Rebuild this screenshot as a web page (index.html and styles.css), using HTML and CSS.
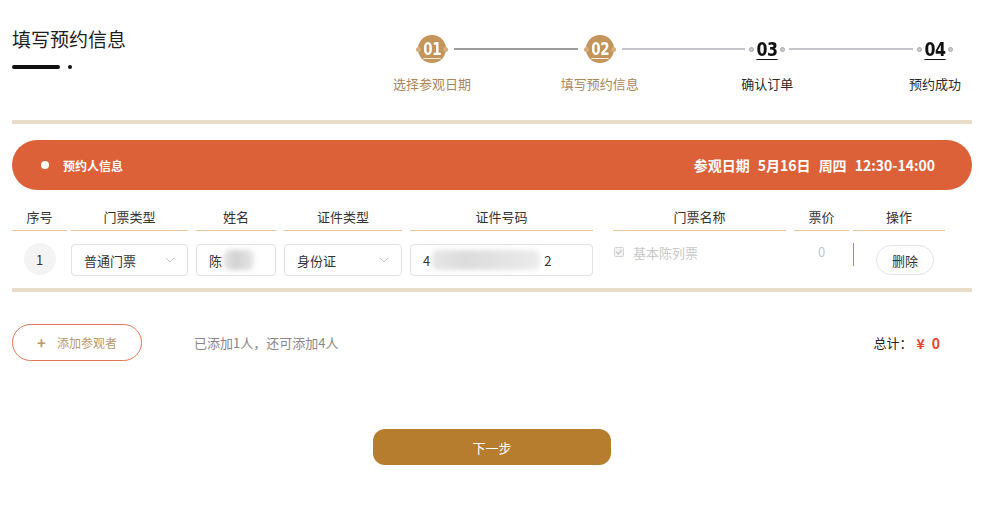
FILE: index.html
```html
<!DOCTYPE html>
<html lang="zh-CN">
<head>
<meta charset="utf-8">
<title>填写预约信息</title>
<link rel="stylesheet" href="styles.css">
</head>
<body>
<div class="page">
  <header class="top">
    <div class="title-block">
      <h1 class="title">填写预约信息</h1>
      <div class="title-mark"><span class="bar"></span><span class="tdot"></span></div>
    </div>
    <div class="steps">
      <div class="marks">
        <div class="mark"><span class="sd"></span><span class="circle"><span class="num">01</span></span><span class="sd"></span></div>
        <span class="line dark"></span>
        <div class="mark"><span class="sd"></span><span class="circle"><span class="num">02</span></span><span class="sd"></span></div>
        <span class="line"></span>
        <div class="mark"><span class="gd"></span><span class="num plain">03</span><span class="gd"></span></div>
        <span class="line"></span>
        <div class="mark"><span class="gd"></span><span class="num plain">04</span><span class="gd"></span></div>
      </div>
      <div class="labels">
        <span class="label active">选择参观日期</span>
        <span class="label active">填写预约信息</span>
        <span class="label">确认订单</span>
        <span class="label">预约成功</span>
      </div>
    </div>
  </header>

  <div class="sep"></div>

  <div class="banner">
    <span class="b-dot"></span>
    <span class="b-title">预约人信息</span>
    <span class="b-date">参观日期<span class="sp">5月16日</span><span class="sp">周四</span><span class="sp">12:30-14:00</span></span>
  </div>

  <div class="trow thead">
    <div class="cell c1">序号</div>
    <div class="cell c2">门票类型</div>
    <div class="cell c3">姓名</div>
    <div class="cell c4">证件类型</div>
    <div class="cell c5">证件号码</div>
    <div class="cell c6">门票名称</div>
    <div class="cell c7">票价</div>
    <div class="cell c8">操作</div>
  </div>

  <div class="trow tbody">
    <div class="c1 idx-cell"><span class="idx">1</span></div>
    <div class="c2 field select">普通门票<svg class="chev" width="10" height="6" viewBox="0 0 10 6"><polyline points="1,1 5,5 9,1" fill="none" stroke="#c0c4cc" stroke-width="1"/></svg></div>
    <div class="c3 field">陈<span class="blur blur-name"></span></div>
    <div class="c4 field select">身份证<svg class="chev" width="10" height="6" viewBox="0 0 10 6"><polyline points="1,1 5,5 9,1" fill="none" stroke="#c0c4cc" stroke-width="1"/></svg></div>
    <div class="c5 field">4<span class="blur blur-id"></span>2</div>
    <div class="c6 ticket">
      <svg class="chk" width="10" height="10" viewBox="0 0 10 10"><rect x="0.5" y="0.5" width="9" height="9" rx="1" fill="#f3f3f3" stroke="#d4d4d4"/><polyline points="2.3,5 4.2,6.9 7.8,3.2" fill="none" stroke="#c4c4c4" stroke-width="1.2"/></svg>
      <span>基本陈列票</span>
    </div>
    <div class="c7 price">0</div>
    <div class="c8 op"><span class="vline"></span><button class="del">删除</button></div>
  </div>

  <div class="sep sep2"></div>

  <div class="foot">
    <button class="add"><span class="plus">+</span><span>添加参观者</span></button>
    <span class="info">已添加1人，还可添加4人</span>
    <span class="total">总计：<span class="money"><span>¥</span><span class="zero">0</span></span></span>
  </div>

  <button class="next">下一步</button>
</div>
</body>
</html>
```

FILE: styles.css
```css
* { box-sizing: border-box; }

body {
  margin: 0;
  background: #fff;
  font-family: "Noto Sans CJK SC", "Noto Sans", sans-serif;
  color: #333;
  text-spacing-trim: space-all;
}

.page {
  width: 960px;
  margin-left: 12px;
}

/* header */
.top {
  display: flex;
  justify-content: space-between;
  height: 120px;
}

.title {
  margin: 27px 0 0;
  font-size: 19px;
  line-height: 24px;
  font-weight: normal;
  color: #1e1e1e;
}

.title-mark {
  display: flex;
  align-items: center;
  margin-top: 14px;
}

.title-mark .bar {
  width: 48px;
  height: 4px;
  border-radius: 2px;
  background: #111;
}

.title-mark .tdot {
  width: 4px;
  height: 4px;
  border-radius: 50%;
  background: #111;
  margin-left: 8px;
}

.steps {
  width: 587px;
  margin-right: -5px;
  margin-top: 35px;
}

.marks {
  display: flex;
  align-items: center;
  height: 28px;
  padding: 0 24px;
}

.mark {
  width: 36px;
  height: 28px;
  display: flex;
  align-items: center;
  justify-content: center;
  flex: none;
}

.circle {
  width: 28px;
  height: 28px;
  border-radius: 50%;
  background: #c4955a;
  display: flex;
  align-items: center;
  justify-content: center;
}

.sd {
  width: 5px;
  height: 5px;
  border-radius: 50%;
  background: #d5ad77;
  flex: none;
}

.sd:first-child { margin-right: -3px; position: relative; z-index: 1; }
.sd:last-child { margin-left: -3px; position: relative; z-index: 1; }

.gd {
  width: 5px;
  height: 5px;
  border-radius: 50%;
  background: #c9c9c9;
  border: 1px solid #a9a9a9;
  flex: none;
}

.num {
  font-family: "DejaVu Sans Condensed", "DejaVu Sans", sans-serif;
  font-weight: bold;
  font-size: 17px;
  line-height: 18px;
  letter-spacing: -0.5px;
  color: #fff;
  border-bottom: 1px solid rgba(255, 255, 255, 0.8);
  transform: scaleX(0.88);
}

.num.plain {
  color: #111;
  font-size: 20px;
  line-height: 20px;
  margin: 0 1px;
  border-bottom-color: #111;
}

.line {
  flex: 1;
  height: 2px;
  margin: 0 4px;
  background: #c4c4cc;
}

.line.dark { background: #9c9c9c; }

.labels {
  display: flex;
  justify-content: space-between;
  margin-top: 12px;
}

.label {
  width: 84px;
  text-align: center;
  font-size: 13px;
  line-height: 18px;
  color: #2a2a2a;
}

.label.active { color: #ad8658; }

/* separators */
.sep {
  height: 4px;
  background: #e9dcc9;
}

/* banner */
.banner {
  margin-top: 16px;
  height: 50px;
  border-radius: 25px;
  background: #dc6139;
  display: flex;
  align-items: center;
  padding: 0 37px 0 29px;
  color: #fff;
}

.b-dot {
  width: 8px;
  height: 8px;
  border-radius: 50%;
  background: #fff;
}

.b-title {
  margin-left: 14px;
  font-size: 12px;
  font-weight: bold;
}

.b-date {
  margin-left: auto;
  font-size: 14px;
  font-weight: bold;
}

.b-date .sp { margin-left: 8px; }

/* table */
.trow {
  display: flex;
}

.thead { margin-top: 14px; }

.cell {
  height: 27px;
  line-height: 26px;
  text-align: center;
  font-size: 13px;
  color: #333;
  border-bottom: 1px solid #e9c596;
}

.c1 { width: 55px; }
.c2 { width: 117px; margin-left: 4px; }
.c3 { width: 80px; margin-left: 8px; }
.c4 { width: 118px; margin-left: 8px; }
.c5 { width: 183px; margin-left: 8px; }
.c6 { width: 173px; margin-left: 20px; }
.c7 { width: 55px; margin-left: 8px; }
.c8 { width: 92px; margin-left: 4px; }

.tbody {
  margin-top: 13px;
  align-items: flex-start;
  height: 32px;
}

.idx-cell {
  display: flex;
  justify-content: center;
  margin-top: -1px;
}

.idx {
  width: 32px;
  height: 32px;
  border-radius: 50%;
  background: #f3f3f3;
  display: flex;
  align-items: center;
  justify-content: center;
  font-size: 13px;
  color: #333;
}

.field {
  height: 32px;
  border: 1px solid #dfe1e6;
  border-radius: 4px;
  padding: 0 12px;
  display: flex;
  align-items: center;
  font-size: 13px;
  color: #333;
}

.select .chev {
  margin-left: auto;
}

.blur {
  display: inline-block;
  height: 20px;
  border-radius: 6px;
  filter: blur(2.5px);
}

.blur-name {
  width: 30px;
  margin-left: 2px;
  background: linear-gradient(90deg, #e4e4e4, #d2d2d2 40%, #e6e6e6);
}

.blur-id {
  width: 108px;
  margin: 0 4px 0 2px;
  background: linear-gradient(90deg, #e6e6e6, #dcdcdc 30%, #e2e2e2 60%, #ececec);
}

.ticket {
  display: flex;
  align-items: center;
  padding-left: 1px;
  height: 16px;
  font-size: 13px;
  color: #c8c8c8;
}

.ticket .chk { margin-right: 9px; }

.price {
  text-align: center;
  font-size: 13px;
  line-height: 16px;
  color: #c8c8c8;
}

.op {
  display: flex;
  align-items: flex-start;
}

.vline {
  width: 1px;
  height: 23px;
  margin-top: -1px;
  background: #b88a4a;
}

.del {
  margin-left: 22px;
  margin-top: 1px;
  width: 58px;
  height: 30px;
  border: 1px solid #e4e4e4;
  border-radius: 15px;
  background: #fff;
  font-family: inherit;
  font-size: 13px;
  color: #333;
  padding: 0;
}

.sep2 { margin-top: 12px; }

/* footer */
.foot {
  margin-top: 32px;
  display: flex;
  align-items: center;
  height: 37px;
}

.add {
  width: 130px;
  height: 37px;
  border: 1px solid #e07657;
  border-radius: 19px;
  background: #fff;
  display: flex;
  align-items: center;
  justify-content: center;
  gap: 11px;
  padding: 0;
  font-family: inherit;
  font-size: 12px;
  color: #b8996c;
}

.add .plus {
  font-size: 15px;
  font-weight: bold;
  line-height: 1;
}

.info {
  margin-left: 52px;
  font-size: 13px;
  color: #888;
}

.total {
  margin-left: auto;
  margin-right: 32px;
  font-size: 13px;
  color: #222;
  display: flex;
  align-items: center;
}

.money {
  margin-left: 4px;
  font-size: 14px;
  font-weight: bold;
  color: #e8432a;
  display: flex;
}

.money .zero { margin-left: 7px; }

.next {
  display: block;
  margin: 68px auto 0;
  width: 238px;
  height: 36px;
  border: none;
  border-radius: 12px;
  background: #b57d2d;
  color: #fff;
  font-family: inherit;
  font-size: 13px;
}
```
